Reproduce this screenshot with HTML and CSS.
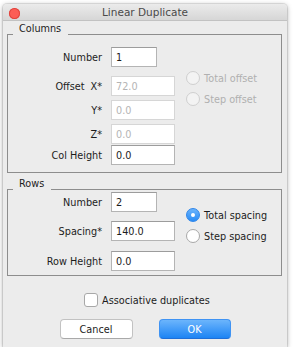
FILE: index.html
```html
<!DOCTYPE html>
<html lang="en">
<head>
    <meta charset="UTF-8">
    <meta name="viewport" content="width=device-width, initial-scale=1.0">
    <title>Linear Duplicate</title>
    <link rel="stylesheet" href="styles.css">
</head>
<body>
    <div class="window">
        <div class="titlebar">
            <span class="close"></span>
            <span class="title">Linear Duplicate</span>
        </div>

        <div class="group cols">
            <span class="group-title">Columns</span>
            <div class="fields">
                <div class="row r-first">
                    <label>Number</label>
                    <input class="short" value="1">
                </div>
                <div class="row r-offset">
                    <label><span class="pre">Offset</span>X*</label>
                    <input value="72.0" disabled>
                </div>
                <div class="row r-tight">
                    <label>Y*</label>
                    <input value="0.0" disabled>
                </div>
                <div class="row r-tight">
                    <label>Z*</label>
                    <input value="0.0" disabled>
                </div>
                <div class="row r-last">
                    <label>Col Height</label>
                    <input value="0.0">
                </div>
            </div>
            <div class="choices choices-cols">
                <div class="choice off"><span class="radio"></span>Total offset</div>
                <div class="choice off"><span class="radio"></span>Step offset</div>
            </div>
        </div>

        <div class="group rows">
            <span class="group-title">Rows</span>
            <div class="fields">
                <div class="row r-first">
                    <label>Number</label>
                    <input class="short" value="2">
                </div>
                <div class="row r-mid">
                    <label>Spacing*</label>
                    <input value="140.0">
                </div>
                <div class="row r-end">
                    <label>Row Height</label>
                    <input value="0.0">
                </div>
            </div>
            <div class="choices choices-rows">
                <div class="choice"><span class="radio on"></span>Total spacing</div>
                <div class="choice"><span class="radio"></span>Step spacing</div>
            </div>
        </div>

        <div class="assoc">
            <span class="check"></span>Associative duplicates
        </div>

        <div class="buttons">
            <button class="btn">Cancel</button>
            <button class="btn primary">OK</button>
        </div>
    </div>
</body>
</html>
```

FILE: styles.css
```css
body{
    margin: 0;
    background: #fff;
    font-family: "DejaVu Sans", sans-serif;
    font-size: 9.7px;
    color: #1c1c1c;
}
.window{
    margin: 4px 0 0 3px;
    width: 284px;
    height: 343px;
    background: #ececec;
    border-radius: 4px 4px 0 0;
    box-shadow: 0 1px 5px rgba(0,0,0,.35), 0 0 0 1px rgba(0,0,0,.08);
    overflow: hidden;
}
.titlebar{
    height: 16px;
    border-bottom: 1px solid #c2c2c2;
    background: linear-gradient(#ebebeb, #d6d6d6);
    display: flex;
    align-items: center;
    position: relative;
}
.close{
    width: 11px;
    height: 11px;
    border-radius: 50%;
    background: #fc5d56;
    box-shadow: inset 0 0 0 1px #e0443e;
    margin: 2px 0 0 6px;
}
.title{
    position: absolute;
    left: 0;
    right: 0;
    text-align: center;
    font-size: 10.5px;
    line-height: 16px;
    color: #4a4a4a;
}

.group{
    position: relative;
    margin: 13px 5px 0 4px;
    border: 1px solid #8d8d8d;
    display: flex;
    align-items: flex-start;
}
.group-title{
    position: absolute;
    top: -12px;
    left: 5px;
    padding: 0 7px 0 6px;
    line-height: 12px;
    background: #ececec;
}
.cols{ padding: 12px 0 7px 0; }
.rows{ margin-top: 16px; padding: 2px 0 4px 0; }

.row{
    display: flex;
    align-items: center;
    height: 20px;
}
.row label{
    width: 94px;
    margin-right: 9px;
    text-align: right;
}
.pre{ margin-right: 6px; }
.r-offset{ margin-top: 9px; }
.r-tight{ margin-top: 4px; }
.r-last{ margin-top: 1px; }
.r-mid{ margin-top: 9px; }
.r-end{ margin-top: 10px; }

input{
    box-sizing: border-box;
    width: 64px;
    height: 20px;
    margin: 0;
    padding: 0 4px;
    border: 1px solid #b4b4b4;
    border-top-color: #9c9c9c;
    background: #fff;
    font-family: "DejaVu Sans", sans-serif;
    font-size: 9.7px;
    color: #1c1c1c;
    outline: none;
}
input.short{ width: 46px; }
input:disabled{
    border-color: #d6d6d6;
    background: #fff;
    color: #b4b4b4;
}

.choices{
    margin-left: 11px;
    display: flex;
    flex-direction: column;
    gap: 7px;
}
.choices-cols{ margin-top: 24px; }
.choices-rows{ margin-top: 16px; }
.choice{
    display: flex;
    align-items: center;
    gap: 4px;
    height: 14px;
    color: #1c1c1c;
}
.choice.off{ color: #b0b0b0; }
.radio{
    box-sizing: border-box;
    width: 14px;
    height: 14px;
    border-radius: 50%;
    border: 1px solid #a8a8a8;
    background: #fff;
    position: relative;
}
.off .radio{
    border-color: #cfcfcf;
    background: #f3f3f3;
}
.radio.on{
    border-color: #2f86ea;
    background: linear-gradient(#6ab3fb, #2a8cf6);
}
.radio.on::after{
    content: "";
    position: absolute;
    left: 4px;
    top: 4px;
    width: 4px;
    height: 4px;
    border-radius: 50%;
    background: #fff;
}

.assoc{
    margin: 17px 0 0 4px;
    display: flex;
    justify-content: center;
    align-items: center;
    gap: 4px;
    height: 14px;
}
.check{
    box-sizing: border-box;
    width: 14px;
    height: 14px;
    border-radius: 3px;
    border: 1px solid #a8a8a8;
    background: #fff;
}

.buttons{
    margin-top: 12px;
    display: flex;
    justify-content: center;
    gap: 26px;
}
.btn{
    box-sizing: border-box;
    width: 73px;
    height: 20px;
    padding: 0;
    border: 1px solid #c2c2c2;
    border-bottom-color: #a9a9a9;
    border-radius: 4px;
    background: #fff;
    font-family: "DejaVu Sans", sans-serif;
    font-size: 9.7px;
    color: #1c1c1c;
}
.btn.primary{
    width: 72px;
    border-color: #3f93f3;
    border-bottom-color: #1f6fd8;
    background: linear-gradient(#6cb5fc, #1d84f4);
    color: #fff;
}
```
